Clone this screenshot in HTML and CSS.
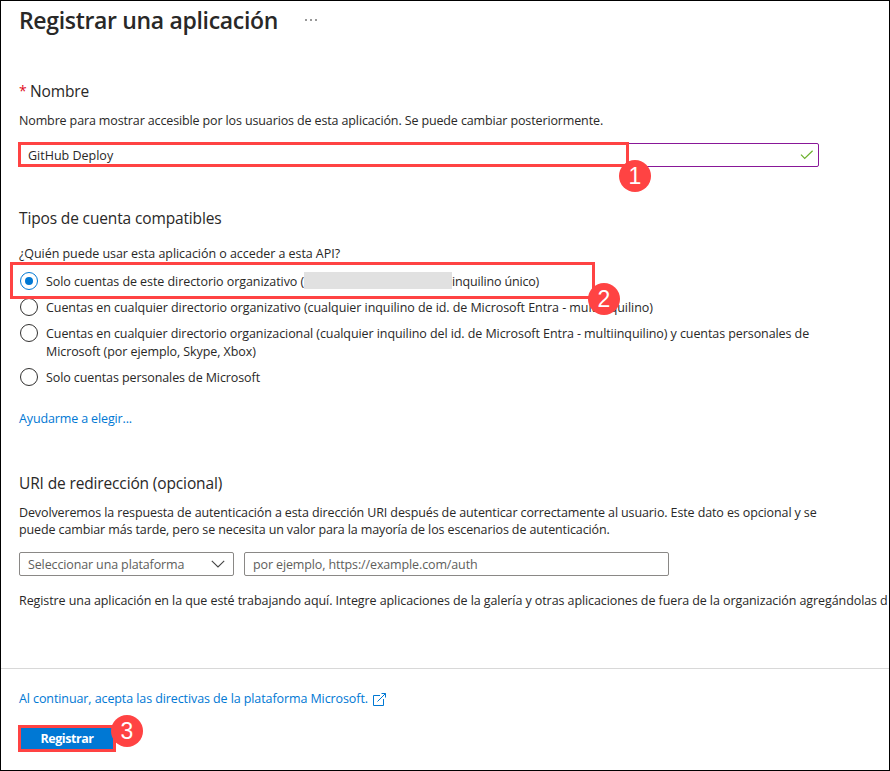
FILE: index.html
```html
<!DOCTYPE html>
<html lang="es">
<head>
<meta charset="utf-8">
<title>Registrar una aplicación</title>
<link rel="stylesheet" href="styles.css">
</head>
<body>
<main class="page">
  <header class="header"><h1 class="title">Registrar una aplicación</h1><span class="more"><i></i><i></i><i></i></span></header>

  <section class="name">
    <h2 class="heading"><span class="required">*</span><span>Nombre</span></h2>
    <p class="text desc">Nombre para mostrar accesible por los usuarios de esta aplicación. Se puede cambiar posteriormente.</p>
    <div class="name-input">
      <span>GitHub Deploy</span>
      <svg class="check" width="14" height="10" viewBox="0 0 14 10"><path d="M1 4.7 4.7 8.4 12.6.8" fill="none" stroke="#6bb02c" stroke-width="1.2"/></svg>
      <div class="mark mark-name"><b class="badge">1</b></div>
    </div>
  </section>

  <section class="types">
    <h2 class="heading">Tipos de cuenta compatibles</h2>
    <p class="text question">¿Quién puede usar esta aplicación o acceder a esta API?</p>
    <div class="options">
      <div class="option"><span class="radio checked"></span><p class="text single"><span>Solo cuentas de este directorio organizativo (</span><span class="redacted"></span><span class="tenant">inquilino único)</span></p><div class="mark mark-option"><b class="badge">2</b></div></div>
      <div class="option"><span class="radio"></span><p class="text">Cuentas en cualquier directorio organizativo (cualquier inquilino de id. de Microsoft Entra - multiinquilino)</p></div>
      <div class="option"><span class="radio"></span><p class="text both">Cuentas en cualquier directorio organizacional (cualquier inquilino del id. de Microsoft Entra - multiinquilino) y cuentas personales de<br>Microsoft (por ejemplo, Skype, Xbox)</p></div>
      <div class="option"><span class="radio"></span><p class="text personal">Solo cuentas personales de Microsoft</p></div>
    </div>
    <a class="text link help">Ayudarme a elegir...</a>
  </section>

  <section class="redirect">
    <h2 class="heading">URI de redirección (opcional)</h2>
    <p class="text paragraph">Devolveremos la respuesta de autenticación a esta dirección URI después de autenticar correctamente al usuario. Este dato es opcional y se<br>puede cambiar más tarde, pero se necesita un valor para la mayoría de los escenarios de autenticación.</p>
    <div class="fields">
      <div class="field select"><span>Seleccionar una plataforma</span><svg width="14" height="8" viewBox="0 0 14 8"><path d="M.8.8 7 7 13.2.8" fill="none" stroke="#444" stroke-width="1.1"/></svg></div>
      <div class="field uri"><span>por ejemplo, https://example.com/auth</span></div>
    </div>
    <p class="text note">Registre una aplicación en la que esté trabajando aquí. Integre aplicaciones de la galería y otras aplicaciones de fuera de la organización agregándolas d</p>
  </section>

  <footer class="footer">
    <a class="text link policy"><span>Al continuar, acepta las directivas de la plataforma Microsoft.</span><svg width="13" height="13" viewBox="0 0 13 13" fill="none" stroke="#0078d4" stroke-width="1"><path d="M7 2.5H.5v10h10V6M4.5 8.5l8-8M8.5.5h4v4"/></svg></a>
    <button class="submit">Registrar<b class="badge">3</b></button>
  </footer>
</main>
</body>
</html>
```
FILE: styles.css
```css
* { box-sizing: border-box; }
body { margin: 0; font-family: "Open Sans", "Noto Sans", sans-serif; color: #292827; }
h1, h2, p { margin: 0; font-weight: 400; }
.page { position: relative; width: 890px; height: 771px; border: 1px solid #000; overflow: hidden; background: #fff; white-space: nowrap; }
.header { display: flex; align-items: center; height: 32px; margin: 3px 0 0 18px; }
.title { font-size: 23px; line-height: 32px; font-weight: 600; letter-spacing: -0.327px; }
.more { display: flex; gap: 3px; margin-left: 27px; }
.more i { width: 2px; height: 2px; background: #999; }
.name, .types, .redirect { padding-left: 18px; }
.name { padding-top: 45px; }
.heading { display: flex; font-size: 15.5px; line-height: 20px; letter-spacing: -0.14px; }
.required { width: 11px; color: #e00b1c; font-size: 14px; }
.text { font-size: 12.5px; line-height: 18px; }
.desc { margin-top: 11px; letter-spacing: -0.129px; }
.name-input { position: relative; display: flex; align-items: center; justify-content: space-between; width: 800px; height: 24px; margin-top: 13px; padding: 0 4px 0 8px; border: 1px solid #881798; border-radius: 2px; font-size: 12.5px; }
.mark { position: absolute; border: 3px solid #ff4343; }
.mark-name { left: -2px; top: -2px; width: 611px; height: 25px; }
.mark-option { left: -9px; top: -10px; width: 585px; height: 37px; }
.badge { position: absolute; width: 32px; height: 32px; border-radius: 50%; background: #ff4343; color: #fff; font: 400 23px/32px "Liberation Sans", sans-serif; text-align: center; letter-spacing: 0; }
.mark-name .badge { left: 598px; top: 15px; }
.mark-option .badge { left: 575px; top: 18px; }
.types { padding-top: 41px; }
.question { margin-top: 17px; letter-spacing: -0.054px; }
.options { display: flex; flex-direction: column; gap: 7px; margin-top: 9px; letter-spacing: -0.065px; }
.option { position: relative; display: flex; align-items: flex-start; }
.option:first-child { z-index: 1; }
.option .text { padding-top: 1px; }
.radio { display: grid; place-items: center; width: 18px; height: 18px; margin: 0 8px 0 1px; border: 1px solid #323130; border-radius: 50%; }
.radio.checked { border-color: #0078d4; }
.radio.checked::after { content: ""; width: 8px; height: 8px; border-radius: 50%; background: #0078d4; }
.single { display: flex; }
.tenant { letter-spacing: -0.17px; }
.both { letter-spacing: -0.078px; }
.personal { letter-spacing: -0.099px; }
.redacted { width: 148px; height: 17px; margin-top: -1px; background: #e1e1e1; }
.link { color: #0078d4; }
.help { display: block; margin-top: 23px; letter-spacing: -0.134px; }
.redirect { padding-top: 45px; }
.paragraph { margin-top: 11px; line-height: 17px; letter-spacing: -0.115px; }
.fields { display: flex; gap: 10px; margin-top: 14px; }
.field { display: flex; align-items: center; justify-content: space-between; height: 24px; padding: 0 8px; border: 1px solid #8a8886; border-radius: 2px; font-size: 12.5px; letter-spacing: -0.13px; color: #605e5c; }
.select { width: 215px; }
.uri { width: 425px; }
.note { margin-top: 16px; letter-spacing: -0.083px; }
.footer { display: flex; flex-direction: column; align-items: flex-start; margin-top: 58px; padding: 21px 0 0 17px; border-top: 1px solid #d8d8d8; }
.policy { display: flex; align-items: center; gap: 5px; margin-left: 1px; letter-spacing: -0.094px; }
.submit { position: relative; width: 98px; height: 27px; margin-top: 17px; padding: 0; border: 3px solid #ff4343; background: #0078d4; color: #fff; font: 700 12.5px/21px "Open Sans", sans-serif; letter-spacing: -0.45px; }
.submit .badge { left: 90px; top: -13px; }
```
